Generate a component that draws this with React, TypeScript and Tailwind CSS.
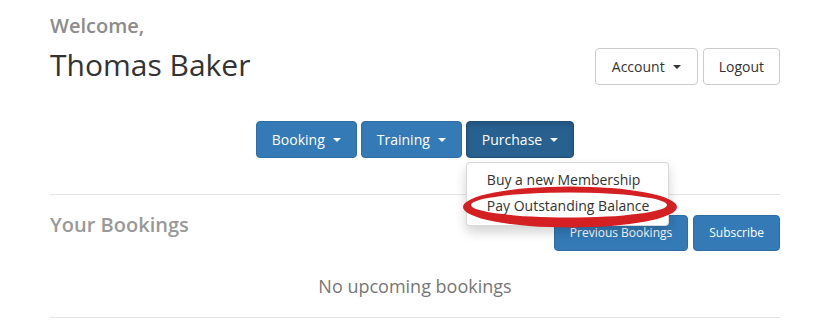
import React from "react";

function Caret({ color }: { color: string }) {
  return (
    <span
      className="inline-block w-0 h-0 border-x-[4px] border-x-transparent border-t-[4px] ml-[8px]"
      style={{ borderTopColor: color }}
    />
  );
}

export default function App() {
  return (
    <div
      className="relative w-[821px] h-[323px] overflow-hidden bg-white text-[#333]"
      style={{ fontFamily: '"Open Sans", "Noto Sans", sans-serif' }}
    >
      <div className="ml-[50px] w-[730px]">
        {/* Header */}
        <div className="flex justify-between items-start">
          <div>
            <div className="mt-[14px] text-[20px] leading-[24px] font-semibold text-[#8c8c8c]">
              Welcome,
            </div>
            <div className="mt-[9px] text-[30px] leading-[36px] text-[#333]">
              Thomas Baker
            </div>
          </div>
          <div className="pt-[48px] flex gap-[5px]">
            <button className="h-[37px] px-[16px] flex items-center border border-[#ccc] rounded-[4px] bg-white text-[14px] text-[#333]">
              Account
              <Caret color="#333" />
            </button>
            <button className="h-[37px] px-[15px] flex items-center border border-[#ccc] rounded-[4px] bg-white text-[14px] text-[#333]">
              Logout
            </button>
          </div>
        </div>

        {/* Nav buttons */}
        <div className="mt-[36px] flex justify-center">
          <div className="relative flex gap-[4px]">
            <button className="h-[37px] px-[15px] flex items-center border border-[#2e6da4] rounded-[4px] bg-[#337ab7] text-[14px] text-white">
              Booking
              <Caret color="#fff" />
            </button>
            <button className="h-[37px] px-[15px] flex items-center border border-[#2e6da4] rounded-[4px] bg-[#337ab7] text-[14px] text-white">
              Training
              <Caret color="#fff" />
            </button>
            <div className="relative">
              <button className="h-[37px] px-[15px] flex items-center border border-[#204d74] rounded-[4px] bg-[#286090] text-[14px] text-white shadow-[inset_0_3px_5px_rgba(0,0,0,0.125)]">
                Purchase
                <Caret color="#fff" />
              </button>
              <div className="absolute left-0 top-[41px] z-10 w-[203px] pt-[3px] pb-[7px] bg-white border border-[rgba(0,0,0,0.15)] rounded-[4px] shadow-[0_6px_12px_rgba(0,0,0,0.175)]">
                <div className="h-[26px] px-[20px] flex items-center text-[14px] text-[#333] whitespace-nowrap">
                  Buy a new Membership
                </div>
                <div className="h-[26px] px-[20px] flex items-center text-[14px] text-[#333] whitespace-nowrap">
                  Pay Outstanding Balance
                </div>
              </div>
            </div>
          </div>
        </div>

        <div className="mt-[36px] h-px bg-[#e5e5e5]" />

        {/* Bookings row */}
        <div className="mt-[20px] flex justify-between items-start">
          <div className="text-[20px] leading-[20px] font-semibold text-[#999]">
            Your Bookings
          </div>
          <div className="flex gap-[5px]">
            <button className="h-[36px] px-[15px] flex items-center border border-[#2e6da4] rounded-[4px] bg-[#337ab7] text-[12px] text-white">
              Previous Bookings
            </button>
            <button className="h-[36px] px-[15px] flex items-center border border-[#2e6da4] rounded-[4px] bg-[#337ab7] text-[12px] text-white">
              Subscribe
            </button>
          </div>
        </div>

        <div className="mt-[23px] text-center text-[18px] leading-[24px] text-[#777]">
          No upcoming bookings
        </div>

        <div className="mt-[19px] h-px bg-[#e5e5e5]" />
      </div>

      {/* Red annotation ellipse */}
      <svg
        className="absolute left-0 top-0 z-20 pointer-events-none"
        width="821"
        height="323"
        viewBox="0 0 821 323"
      >
        <path
          fillRule="evenodd"
          fill="#d41f23"
          d="M463 207 A107 20.5 0 1 0 677 207 A107 20.5 0 1 0 463 207 Z M471 205 A98 12.5 0 1 1 667 205 A98 12.5 0 1 1 471 205 Z"
        />
      </svg>
    </div>
  );
}
